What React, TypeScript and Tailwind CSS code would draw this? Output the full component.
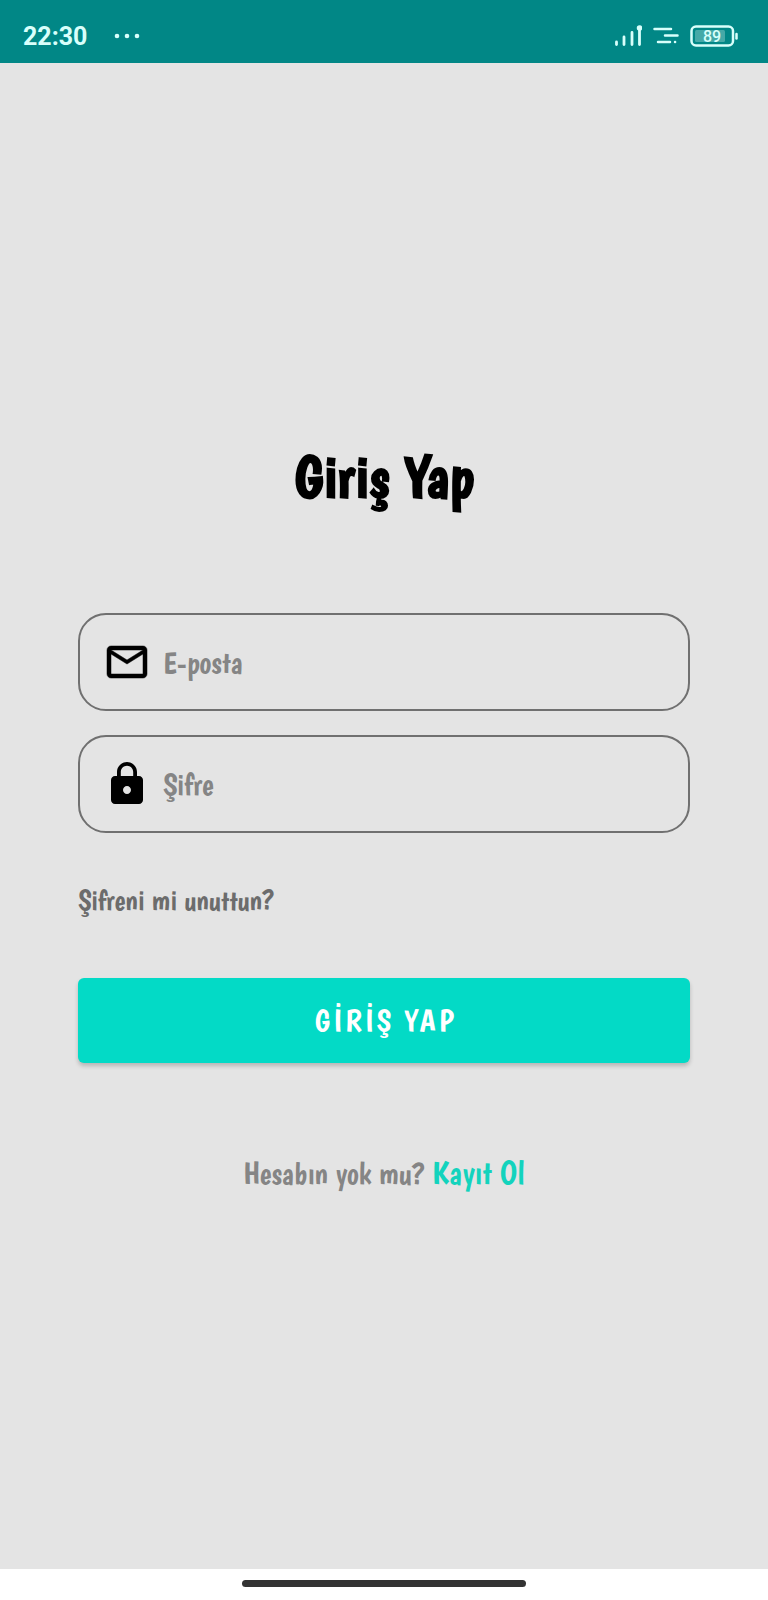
import type { ReactNode } from "react";

type FieldProps = {
  id: string;
  type: string;
  label: string;
  autoComplete: string;
  icon: ReactNode;
};

function MailIcon() {
  return (
    <svg viewBox="0 0 24 24" className="size-12 shrink-0 fill-black stroke-black stroke-[0.25]" aria-hidden="true">
      <path d="M20 4H4c-1.100 0-1.990.9-1.990 2L2 18c0 1.100.9 2 2 2h16c1.100 0 2-.9 2-2V6c0-1.100-.9-2-2-2zm0 14H4V8l8 5 8-5v10zm-8-7L4 6h16l-8 5z" />
    </svg>
  );
}

function LockIcon() {
  return (
    <svg viewBox="0 0 24 24" className="size-12 shrink-0 fill-black" aria-hidden="true">
      <path d="M18 8h-1V6c0-2.760-2.240-5-5-5S7 3.240 7 6v2H6c-1.100 0-2 .9-2 2v10c0 1.100.9 2 2 2h12c1.100 0 2-.9 2-2V10c0-1.100-.9-2-2-2zm-6 9c-1.100 0-2-.9-2-2s.9-2 2-2 2 .9 2 2-.9 2-2 2zm3.100-9H8.900V6c0-1.710 1.390-3.100 3.100-3.100s3.100 1.390 3.100 3.100v2z" />
    </svg>
  );
}

function Field({ id, type, label, autoComplete, icon }: FieldProps) {
  return (
    <div className="flex h-[98px] items-center gap-3 rounded-[28px] border-2 border-[#707070] px-[23px]">
      <label htmlFor={id} aria-label={label}>
        {icon}
      </label>
      <input
        id={id}
        type={type}
        placeholder={label}
        autoComplete={autoComplete}
        className="min-w-0 flex-1 bg-transparent pt-[2px] text-[31px] leading-10 text-[#333333] outline-none placeholder:text-[#858585]"
      />
    </div>
  );
}

function StatusBar() {
  return (
    <header className="flex h-[63px] items-center justify-between bg-[#018786] pt-2 pr-[30px] pl-[23px] text-[#d8fffb]">
      <div className="flex items-center gap-[27px]">
        <time className="pt-[2px] font-[Roboto,sans-serif] text-[25px] leading-8 font-bold">22:30</time>
        <svg viewBox="0 0 26 6" className="h-[6px] w-[26px] fill-current" aria-hidden="true">
          <circle cx="3" cy="3" r="2.300" />
          <circle cx="13" cy="3" r="2.300" />
          <circle cx="23" cy="3" r="2.300" />
        </svg>
      </div>
      <div className="flex items-center gap-[11px]">
        <svg viewBox="0 0 28 22" className="h-[22px] w-7" fill="none" stroke="currentColor" strokeWidth="2.800" strokeLinecap="round" aria-hidden="true">
          <path d="M2.500 17v2.500M10 12v7.500M18 7.500v12M25.500 4v15.500" />
          <circle cx="25.500" cy="3" r="2" fill="currentColor" strokeWidth="1.500" />
        </svg>
        <svg viewBox="0 0 26 22" className="h-[22px] w-[26px]" fill="none" stroke="currentColor" strokeWidth="2.500" strokeLinecap="round" aria-hidden="true">
          <path d="M1.500 4h16.500M12 10.500h12.500M5 17h12M22 17h.1" />
        </svg>
        <svg viewBox="0 0 48 22" className="h-[22px] w-12" role="img" aria-label="89">
          <rect x="1.500" y="1.500" width="41.500" height="19" rx="4.500" fill="none" stroke="currentColor" strokeWidth="2.500" />
          <rect x="5" y="5" width="30" height="12" rx="1.500" fill="#45a9a7" />
          <path d="M46.500 9v4.500" stroke="currentColor" strokeWidth="2.500" strokeLinecap="round" />
          <text x="22" y="17" textAnchor="middle" fill="currentColor" className="font-[Roboto,sans-serif] text-[16px] font-medium">89</text>
        </svg>
      </div>
    </header>
  );
}

export default function App() {
  return (
    <div className="flex min-h-screen flex-col bg-[#e4e4e4] font-['Boogaloo','Lato',sans-serif]">
      <StatusBar />
      <main className="flex flex-1 flex-col justify-center px-[78px] pt-[2px]">
        <h1 className="text-center text-[59px] leading-[72px] font-bold text-black">Giriş Yap</h1>
        <form className="mt-[100px] flex flex-col" onSubmit={(event) => event.preventDefault()}>
          <div className="flex flex-col gap-6">
            <Field id="email" type="email" label="E-posta" autoComplete="email" icon={<MailIcon />} />
            <Field id="password" type="password" label="Şifre" autoComplete="current-password" icon={<LockIcon />} />
          </div>
          <a href="#sifre" className="mt-[47px] self-start text-[29px] leading-10 text-[#6c6c6c]">
            Şifreni mi unuttun?
          </a>
          <button type="submit" className="mt-[58px] h-[85px] rounded-md bg-[#03dac6] pt-[2px] pl-[3px] text-[31px] leading-10 tracking-widest text-white shadow-[0_3px_4px_rgba(0,0,0,0.2)]">
            GİRİŞ YAP
          </button>
        </form>
        <p className="mt-[90px] text-center text-[31px] leading-10 text-[#858585]">
          Hesabın yok mu?{" "}
          <a href="#kayit" className="text-[33px] text-[#13d3bd]">Kayıt Ol</a>
        </p>
      </main>
      <footer className="flex h-[31px] items-center justify-center bg-white pb-[3px]">
        <div className="h-[7px] w-[37%] rounded-full bg-[#333333]" />
      </footer>
    </div>
  );
}
